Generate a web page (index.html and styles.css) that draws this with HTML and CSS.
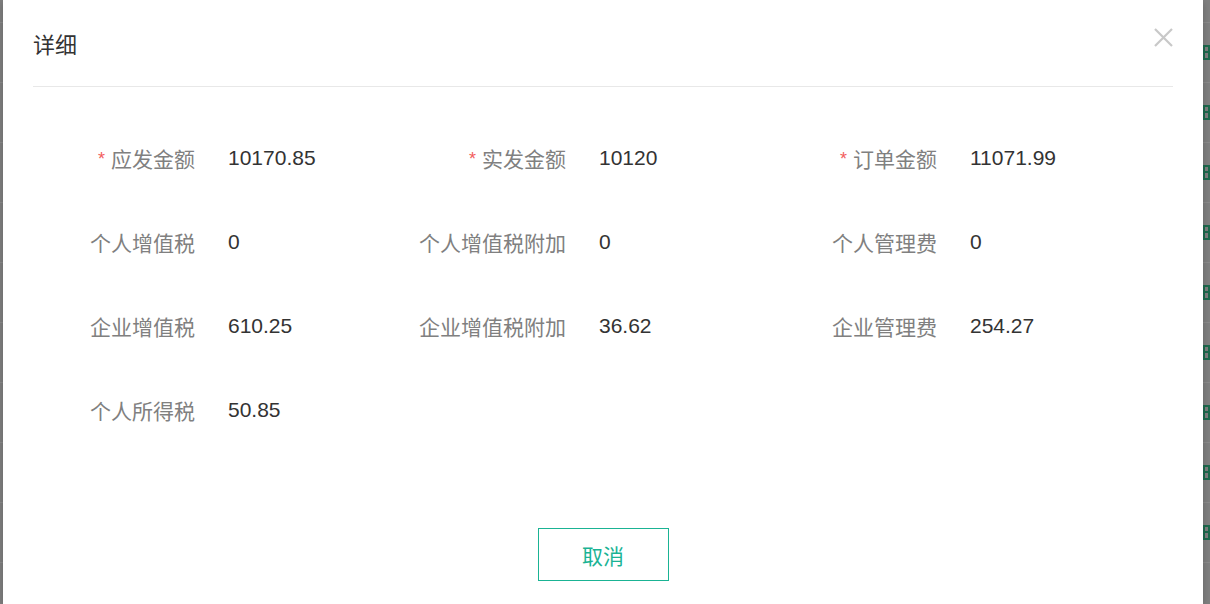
FILE: index.html
```html
<!DOCTYPE html>
<html lang="zh-CN">
<head>
    <meta charset="UTF-8">
    <meta name="viewport" content="width=device-width, initial-scale=1.0">
    <title>详细</title>
    <link rel="stylesheet" href="styles.css">
</head>
<body>
    <!-- Page behind the dialog (dimmed) -->
    <div class="page">
        <div class="page-row first"></div>
        <div class="page-row"><span class="row-icon"></span></div>
        <div class="page-row"><span class="row-icon"></span></div>
        <div class="page-row"><span class="row-icon"></span></div>
        <div class="page-row"><span class="row-icon"></span></div>
        <div class="page-row"><span class="row-icon"></span></div>
        <div class="page-row"><span class="row-icon"></span></div>
        <div class="page-row"><span class="row-icon"></span></div>
        <div class="page-row"><span class="row-icon"></span></div>
        <div class="page-row"><span class="row-icon"></span></div>
    </div>

    <!-- Dialog -->
    <div class="dialog">
        <div class="dialog-header">
            <span class="dialog-title">详细</span>
            <button class="dialog-close" aria-label="关闭">
                <svg width="19" height="19" viewBox="0 0 19 19">
                    <path d="M1 1 L18 18 M18 1 L1 18" stroke="#c8c8c8" stroke-width="2.2" fill="none"/>
                </svg>
            </button>
        </div>

        <div class="detail-grid">
            <div class="detail-item">
                <span class="detail-label"><i class="required">*</i>应发金额</span>
                <span class="detail-value">10170.85</span>
            </div>
            <div class="detail-item">
                <span class="detail-label"><i class="required">*</i>实发金额</span>
                <span class="detail-value">10120</span>
            </div>
            <div class="detail-item">
                <span class="detail-label"><i class="required">*</i>订单金额</span>
                <span class="detail-value">11071.99</span>
            </div>

            <div class="detail-item">
                <span class="detail-label">个人增值税</span>
                <span class="detail-value">0</span>
            </div>
            <div class="detail-item">
                <span class="detail-label">个人增值税附加</span>
                <span class="detail-value">0</span>
            </div>
            <div class="detail-item">
                <span class="detail-label">个人管理费</span>
                <span class="detail-value">0</span>
            </div>

            <div class="detail-item">
                <span class="detail-label">企业增值税</span>
                <span class="detail-value">610.25</span>
            </div>
            <div class="detail-item">
                <span class="detail-label">企业增值税附加</span>
                <span class="detail-value">36.62</span>
            </div>
            <div class="detail-item">
                <span class="detail-label">企业管理费</span>
                <span class="detail-value">254.27</span>
            </div>

            <div class="detail-item">
                <span class="detail-label">个人所得税</span>
                <span class="detail-value">50.85</span>
            </div>
        </div>

        <div class="dialog-footer">
            <button class="btn-cancel">取消</button>
        </div>
    </div>
</body>
</html>
```

FILE: styles.css
```css
/* Global */
body {
    margin: 0;
    padding: 0;
    font-family: "Liberation Sans", "Noto Sans CJK SC", sans-serif;
    background-color: #7f7f7f;
    overflow: hidden;
    height: 604px;
}

/* Dimmed page behind the dialog */
.page {
    height: 604px;
    overflow: hidden;
}

.page-row {
    height: 59px;
    border-bottom: 1px solid #8b8b8b;
    display: flex;
    justify-content: flex-end;
    align-items: center;
}

.page-row.first {
    height: 22px;
}

.row-icon {
    width: 10px;
    height: 15px;
    margin-right: -3px;
    border-left: 2px solid #1d6a4e;
    border-top: 2px solid #1d6a4e;
    border-bottom: 2px solid #1d6a4e;
    position: relative;
    box-sizing: border-box;
}

.row-icon::after {
    content: "";
    position: absolute;
    left: 0;
    right: 0;
    top: 4px;
    border-top: 2px solid #1d6a4e;
}

.row-icon::before {
    content: "";
    position: absolute;
    left: 3px;
    top: 0;
    bottom: 0;
    border-left: 2px solid #1d6a4e;
}

/* Dialog */
.dialog {
    position: absolute;
    top: 0;
    left: 3px;
    width: 1200px;
    height: 604px;
    background-color: #fff;
    box-shadow: 0 2px 8px rgba(0, 0, 0, 0.2);
}

.dialog-header {
    margin: 0 30px;
    height: 86px;
    border-bottom: 1px solid #e8e8e8;
    display: flex;
    justify-content: space-between;
    align-items: center;
}

.dialog-title {
    font-size: 22px;
    color: #333;
    margin-top: -1px;
}

.dialog-close {
    border: none;
    background: none;
    padding: 0;
    margin-top: -11px;
    cursor: pointer;
    display: flex;
}

/* Detail grid */
.detail-grid {
    display: grid;
    grid-template-columns: repeat(3, 371px);
    grid-auto-rows: 84px;
    padding: 29px 0 0 40px;
}

.detail-item {
    display: flex;
    align-items: center;
    font-size: 21px;
}

.detail-label {
    width: 152px;
    text-align: right;
    color: #808080;
}

.required {
    font-style: normal;
    color: #f25d5d;
    font-size: 18px;
    vertical-align: 2px;
    margin-right: 6px;
}

.detail-value {
    margin-left: 33px;
    color: #333;
}

/* Footer */
.dialog-footer {
    display: flex;
    justify-content: center;
    padding-top: 76px;
}

.btn-cancel {
    width: 131px;
    height: 53px;
    border: 1px solid #1ab394;
    background-color: #fff;
    color: #1ab394;
    font-family: "Liberation Sans", "Noto Sans CJK SC", sans-serif;
    font-size: 21px;
    cursor: pointer;
}
```
